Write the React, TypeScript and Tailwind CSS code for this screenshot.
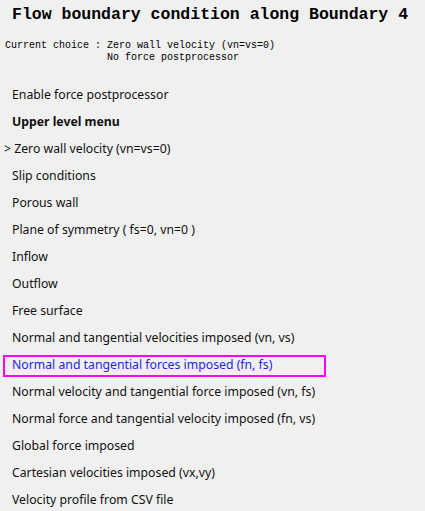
import React from "react";

const items = [
  { label: "Enable force postprocessor" },
  { label: "Upper level menu", bold: true },
  { label: "Zero wall velocity (vn=vs=0)", current: true },
  { label: "Slip conditions" },
  { label: "Porous wall" },
  { label: "Plane of symmetry ( fs=0, vn=0 )" },
  { label: "Inflow" },
  { label: "Outflow" },
  { label: "Free surface" },
  { label: "Normal and tangential velocities imposed (vn, vs)" },
  { label: "Normal and tangential forces imposed (fn, fs)", selected: true },
  { label: "Normal velocity and tangential force imposed (vn, fs)" },
  { label: "Normal force and tangential velocity imposed (fn, vs)" },
  { label: "Global force imposed" },
  { label: "Cartesian velocities imposed (vx,vy)" },
  { label: "Velocity profile from CSV file" },
];

export default function App() {
  return (
    <main className="w-[425px] h-[511px] overflow-hidden bg-[#f0f0f0] text-black">
      {/* Title */}
      <h1
        className="pl-[12px] pt-[5px] text-[16.5px] leading-[20px] font-bold whitespace-pre"
        style={{ fontFamily: '"Liberation Mono", monospace' }}
      >
        Flow boundary condition along Boundary 4
      </h1>

      {/* Current choice */}
      <div
        className="pl-[5px] mt-[15px] text-[10px] leading-[12px] whitespace-pre"
        style={{ fontFamily: '"Liberation Mono", monospace' }}
      >
        <div>Current choice : Zero wall velocity (vn=vs=0)</div>
        <div>{"                 "}No force postprocessor</div>
      </div>

      {/* Menu */}
      <ul
        className="mt-[18px] flex flex-col text-[12.25px] text-[#111]"
        style={{ fontFamily: '"Noto Sans", sans-serif' }}
      >
        {items.map((it, i) => (
          <li key={i} className="h-[27px] flex items-center">
            {it.selected ? (
              <div className="ml-[3px] w-[323px] h-[22px] border-2 border-[#ff00ff] flex items-center pl-[7px] text-[#1f1fe0]">
                {it.label}
              </div>
            ) : it.current ? (
              <div className="pl-[4px] whitespace-pre">{"> " + it.label}</div>
            ) : (
              <div className={`pl-[12px] ${it.bold ? "font-bold" : ""}`}>{it.label}</div>
            )}
          </li>
        ))}
      </ul>
    </main>
  );
}
